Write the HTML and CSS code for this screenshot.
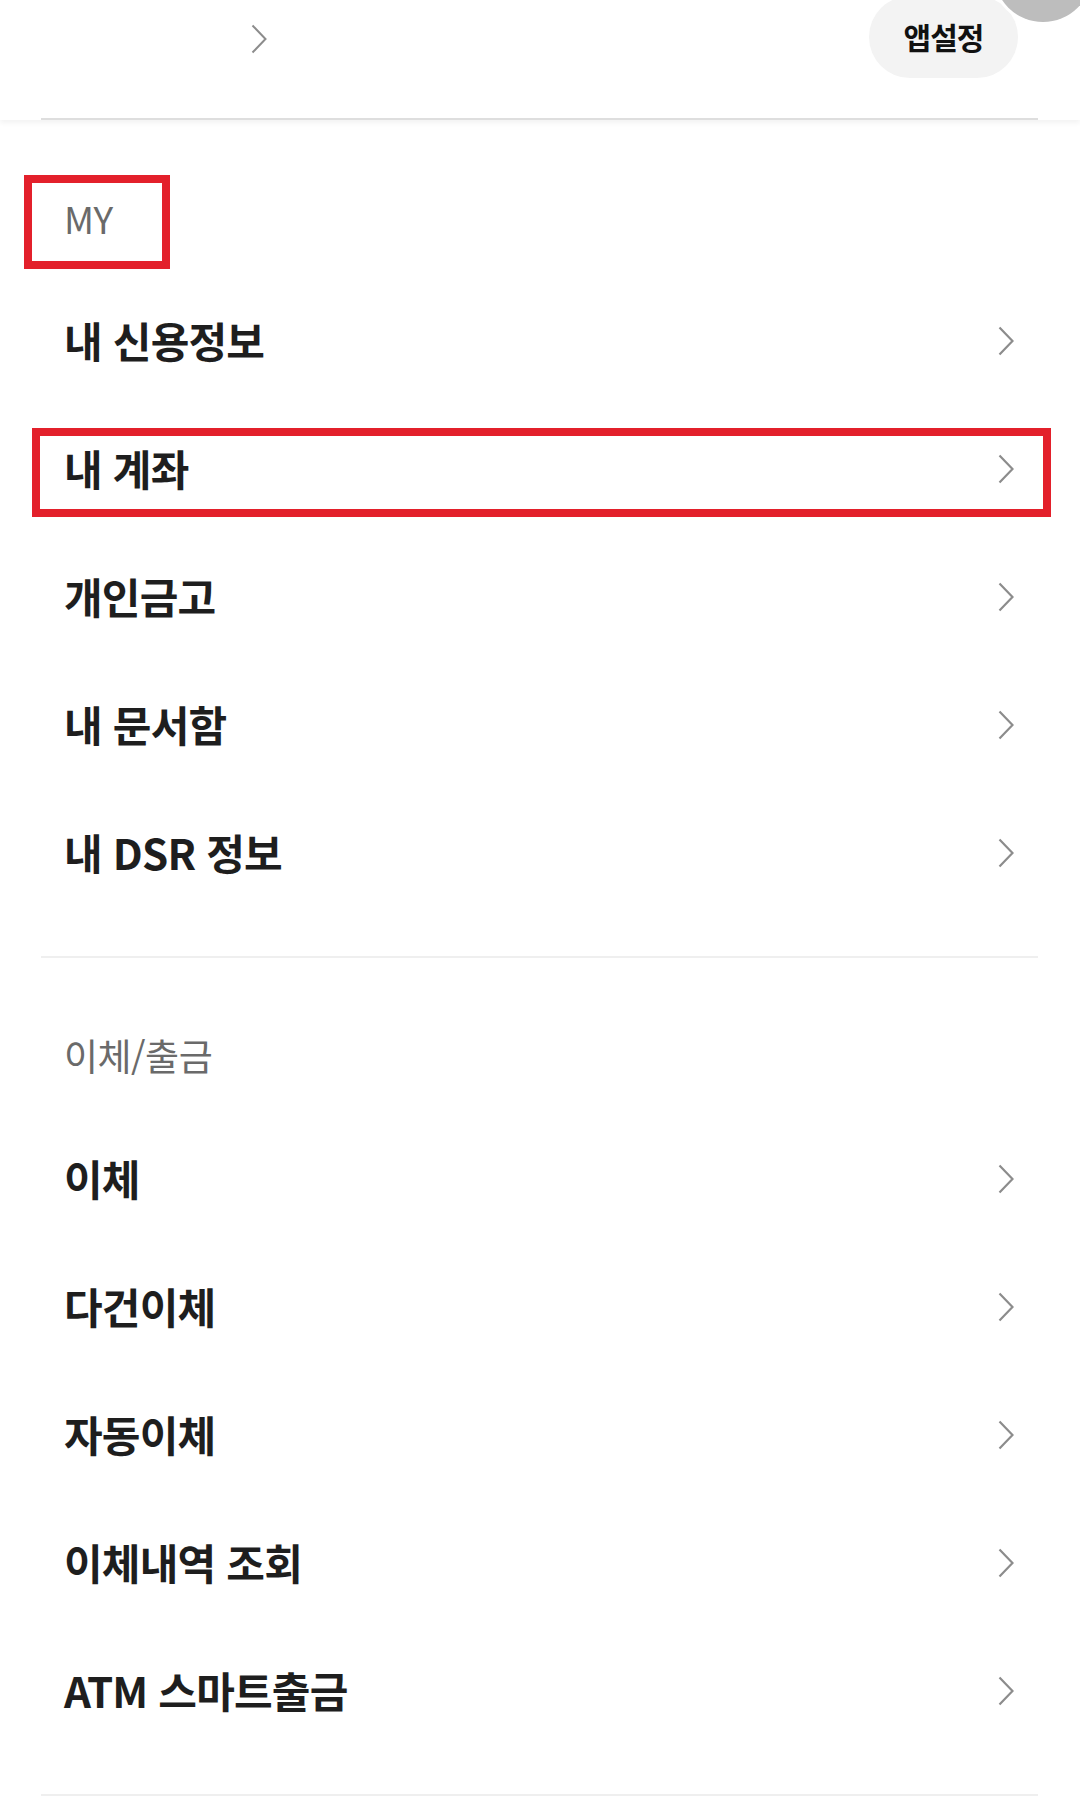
FILE: index.html
```html
<!DOCTYPE html>
<html lang="ko">
<head>
<meta charset="utf-8">
<title>메뉴</title>
<link rel="stylesheet" href="styles.css">
</head>
<body>
<div class="page">
  <header class="topbar">
    <svg class="top-chev" viewBox="0 0 16 30" width="16" height="30"><path d="M1.5 1.5 L14.5 15 L1.5 28.5" /></svg>
    <div class="spacer"></div>
    <div class="pill">앱설정</div>
    <div class="circle"></div>
    <div class="topline"></div>
  </header>

  <section class="group first">
    <div class="label marked-label"><span>MY</span></div>
    <ul class="menu">
      <li class="item"><span>내 신용정보</span><svg class="chev" viewBox="0 0 16 30" width="16" height="30"><path d="M1.5 1.5 L14.5 15 L1.5 28.5" /></svg></li>
      <li class="item marked-item"><span>내 계좌</span><svg class="chev" viewBox="0 0 16 30" width="16" height="30"><path d="M1.5 1.5 L14.5 15 L1.5 28.5" /></svg></li>
      <li class="item"><span>개인금고</span><svg class="chev" viewBox="0 0 16 30" width="16" height="30"><path d="M1.5 1.5 L14.5 15 L1.5 28.5" /></svg></li>
      <li class="item"><span>내 문서함</span><svg class="chev" viewBox="0 0 16 30" width="16" height="30"><path d="M1.5 1.5 L14.5 15 L1.5 28.5" /></svg></li>
      <li class="item"><span>내 DSR 정보</span><svg class="chev" viewBox="0 0 16 30" width="16" height="30"><path d="M1.5 1.5 L14.5 15 L1.5 28.5" /></svg></li>
    </ul>
  </section>

  <section class="group second">
    <div class="label"><span>이체/출금</span></div>
    <ul class="menu">
      <li class="item"><span>이체</span><svg class="chev" viewBox="0 0 16 30" width="16" height="30"><path d="M1.5 1.5 L14.5 15 L1.5 28.5" /></svg></li>
      <li class="item"><span>다건이체</span><svg class="chev" viewBox="0 0 16 30" width="16" height="30"><path d="M1.5 1.5 L14.5 15 L1.5 28.5" /></svg></li>
      <li class="item"><span>자동이체</span><svg class="chev" viewBox="0 0 16 30" width="16" height="30"><path d="M1.5 1.5 L14.5 15 L1.5 28.5" /></svg></li>
      <li class="item"><span>이체내역 조회</span><svg class="chev" viewBox="0 0 16 30" width="16" height="30"><path d="M1.5 1.5 L14.5 15 L1.5 28.5" /></svg></li>
      <li class="item"><span>ATM 스마트출금</span><svg class="chev" viewBox="0 0 16 30" width="16" height="30"><path d="M1.5 1.5 L14.5 15 L1.5 28.5" /></svg></li>
    </ul>
  </section>
</div>
</body>
</html>
```

FILE: styles.css
```css
*, *::before, *::after { box-sizing: border-box; }

html, body {
  margin: 0;
  padding: 0;
  background: #ffffff;
}

body {
  font-family: "Noto Sans CJK KR", "Noto Sans", sans-serif;
  color: #222222;
  width: 1080px;
  overflow: hidden;
}

.page {
  width: 1080px;
}

.topbar {
  position: relative;
  height: 120px;
  display: flex;
  align-items: flex-start;
  box-shadow: 0 3px 5px rgba(0, 0, 0, 0.05);
}

.top-chev {
  margin-left: 251px;
  margin-top: 24px;
  fill: none;
  stroke: #8c8c8c;
  stroke-width: 2;
}

.spacer { flex: 1; }

.pill {
  margin-top: -4px;
  margin-right: 62px;
  width: 149px;
  height: 82px;
  border-radius: 41px;
  background: #f3f3f3;
  display: flex;
  align-items: center;
  justify-content: center;
  padding-bottom: 2px;
  font-size: 30px;
  font-weight: 700;
  color: #111111;
  letter-spacing: -1px;
}

.circle {
  position: absolute;
  left: 994px;
  top: -76px;
  width: 98px;
  height: 98px;
  border-radius: 50%;
  background: #bdbdbd;
  box-shadow: 0 0 0 3px #ffffff;
}

.topline {
  position: absolute;
  left: 41px;
  right: 42px;
  bottom: 0;
  height: 2px;
  background: #dedede;
}

.group {
  border-bottom: 2px solid #efefef;
  margin: 0 42px 0 41px;
  padding-bottom: 39px;
}

.group.first { padding-top: 45px; }
.group.second { padding-top: 41px; }

.label {
  position: relative;
  height: 112px;
  display: flex;
  align-items: center;
  padding-left: 23px;
  padding-bottom: 6px;
  font-size: 37px;
  color: #6a6a6a;
  font-weight: 400;
  letter-spacing: -0.5px;
}

.group.second .label { height: 116px; padding-bottom: 4px; }

.marked-label::before {
  content: "";
  position: absolute;
  left: -17px;
  top: 10px;
  width: 146px;
  height: 94px;
  border: 8px solid #e3202b;
}

.menu {
  list-style: none;
  margin: 0;
  padding: 0;
}

.item {
  position: relative;
  height: 128px;
  display: flex;
  align-items: center;
  justify-content: space-between;
  padding-left: 23px;
  padding-right: 24px;
  font-size: 42px;
  font-weight: 700;
  color: #1e1e1e;
  letter-spacing: -0.8px;
}

.item span {
  position: relative;
  top: -2px;
}

.chev {
  fill: none;
  stroke: #8c8c8c;
  stroke-width: 2.2;
  width: 16px;
  height: 30px;
}

.marked-item::before {
  content: "";
  position: absolute;
  left: -9px;
  top: 23px;
  width: 1019px;
  height: 89px;
  border: 8px solid #e3202b;
}
```
